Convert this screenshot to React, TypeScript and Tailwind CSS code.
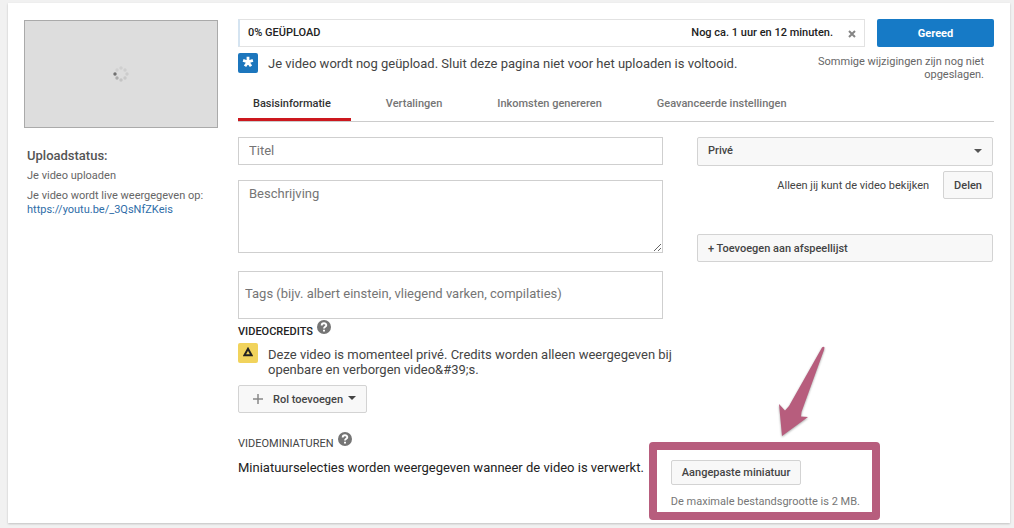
import { ReactNode, useState } from 'react'
import clsx from 'clsx'

const tabs = [
  'Basisinformatie',
  'Vertalingen',
  'Inkomsten genereren',
  'Geavanceerde instellingen',
]

const controlStyle =
  'rounded-[2px] border border-[#d3d3d3] bg-[#f8f8f8] text-[11px] font-medium text-[#444] hover:bg-[#f0f0f0]'

const buttonStyle = clsx(controlStyle, 'px-[10px] leading-4')

const fieldStyle =
  'block w-full border border-[#cfcfcf] bg-white text-[13px] leading-4 text-[#333] outline-none placeholder:text-[#757575] focus:border-[#1b7fcc]'

export default function App() {
  return (
    <div className="min-h-screen bg-[#f1f1f1] px-1 pt-[3px] pb-[5px] pl-2 font-['Roboto',sans-serif] text-[11px] leading-4 text-[#444]">
      <main className="flex gap-5 bg-white px-4 pt-4 pb-[3px] shadow-[0_1px_2px_rgba(0,0,0,0.2)]">
        <UploadStatus />
        <div className="min-w-0 flex-1">
          <UploadHeader />
          <Tabs />
          <div className="mt-[15px] flex gap-[34px] pr-px">
            <BasicForm />
            <PrivacySettings />
          </div>
          <Credits />
          <Thumbnails />
        </div>
      </main>
    </div>
  )
}

function UploadStatus() {
  return (
    <aside className="w-[194px] shrink-0 pt-px">
      <div className="flex h-[108px] items-center justify-center border border-[#aaa] bg-[#ddd]">
        <Spinner />
      </div>
      <div className="mt-5 pl-[3px] leading-[14px] text-[#666]">
        <h2 className="text-[13px] leading-4 font-medium text-[#555]">
          Uploadstatus:
        </h2>
        <p className="mt-[5px]">Je video uploaden</p>
        <p className="mt-[6px]">
          Je video wordt live weergegeven op:{' '}
          <a href="#" className="block text-[#2e6da8] hover:underline">
            https://youtu.be/_3QsNfZKeis
          </a>
        </p>
      </div>
    </aside>
  )
}

function UploadHeader() {
  return (
    <header>
      <div className="flex gap-3">
        <div className="flex h-7 flex-1 items-center border border-l-2 border-[#e2e2e2] border-l-[#d5e4f1] px-2 font-medium text-[#222]">
          <span>0% GEÜPLOAD</span>
          <span className="ml-auto">Nog ca. 1 uur en 12 minuten.</span>
          <button
            type="button"
            aria-label="Uploaden annuleren"
            className="ml-[15px] pt-0.5"
          >
            <svg viewBox="0 0 8 8" className="block size-2">
              <path
                d="M1 1l6 6M7 1L1 7"
                stroke="#858585"
                strokeWidth="2"
                fill="none"
              />
            </svg>
          </button>
        </div>
        <button
          type="button"
          className="h-7 w-[117px] rounded-[2px] bg-[#167ac6] pt-0.5 font-bold text-white hover:bg-[#126db3]"
        >
          Gereed
        </button>
      </div>
      <div className="mt-[6px] flex items-start justify-between">
        <div className="flex items-start gap-[10px]">
          <span className="flex size-5 items-center justify-center rounded-[2px] bg-[#1c76bd]">
            <svg viewBox="0 0 12 12" className="mb-0.5 size-3">
              <path
                d="M6 6V.8M6 6L1.1 4.4M6 6l4.9-1.6M6 6l-3 4.2M6 6l3 4.2"
                stroke="#fff"
                strokeWidth="2.8"
                fill="none"
              />
            </svg>
          </span>
          <p className="pt-[3px] text-[13px] leading-4">
            Je video wordt nog geüpload. Sluit deze pagina niet voor het
            uploaden is voltooid.
          </p>
        </div>
        <p className="max-w-[186px] pt-0.5 pr-[10px] text-right leading-[13px] text-[#666]">
          Sommige wijzigingen zijn nog niet opgeslagen.
        </p>
      </div>
    </header>
  )
}

function Tabs() {
  const [active, setActive] = useState(tabs[0])

  return (
    <nav className="mt-2 flex gap-5 border-b border-[#ccc]">
      {tabs.map((tab) => (
        <button
          key={tab}
          type="button"
          onClick={() => setActive(tab)}
          className={clsx(
            'h-8 border-b-3 pr-5 pl-[15px] font-medium',
            tab === active
              ? 'border-[#cc181e] text-[#333]'
              : 'border-transparent text-[#757575]',
          )}
        >
          {tab}
        </button>
      ))}
    </nav>
  )
}

function BasicForm() {
  return (
    <form className="min-w-0 flex-1">
      <input
        aria-label="Titel"
        placeholder="Titel"
        className={clsx(fieldStyle, 'h-7 px-[10px] pb-0.5')}
      />
      <textarea
        aria-label="Beschrijving"
        placeholder="Beschrijving"
        className={clsx(
          fieldStyle,
          'mt-[15px] h-[73px] resize px-[10px] py-[5px]',
        )}
      />
      <input
        aria-label="Tags"
        placeholder="Tags (bijv. albert einstein, vliegend varken, compilaties)"
        className={clsx(fieldStyle, 'mt-[18px] h-12 px-[6px] pb-1')}
      />
    </form>
  )
}

function PrivacySettings() {
  return (
    <section className="w-[296px] shrink-0">
      <div className="relative">
        <select
          aria-label="Privacy"
          className={clsx(
            controlStyle,
            'h-[29px] w-full appearance-none px-[10px] pb-0.5',
          )}
        >
          <option>Privé</option>
          <option>Verborgen</option>
          <option>Openbaar</option>
        </select>
        <Caret className="pointer-events-none absolute top-3 right-[11px] text-[#555]" />
      </div>
      <div className="mt-[5px] flex items-center justify-end gap-[14px]">
        <span className="pt-0.5">Alleen jij kunt de video bekijken</span>
        <button type="button" className={clsx(buttonStyle, 'h-7 pt-0.5')}>
          Delen
        </button>
      </div>
      <button
        type="button"
        className={clsx(buttonStyle, 'mt-[35px] h-7 w-full pt-0.5 text-left')}
      >
        + Toevoegen aan afspeellijst
      </button>
    </section>
  )
}

function Credits() {
  return (
    <section>
      <SectionTitle>
        <span className="font-medium text-[#222]">VIDEOCREDITS</span>
      </SectionTitle>
      <div className="mt-[3px] flex items-start gap-[10px]">
        <span className="flex size-5 shrink-0 items-center justify-center rounded-[2px] bg-[#f1d35c]">
          <svg viewBox="0 0 10 10" className="mb-0.5 size-[10px]">
            <path
              d="M5 1.8L8.6 8.2H1.4z"
              stroke="#222"
              strokeWidth="2"
              fill="none"
            />
          </svg>
        </span>
        <p className="max-w-[410px] pt-1 text-[13px] leading-[15px]">
          Deze video is momenteel privé. Credits worden alleen weergegeven bij
          openbare en verborgen video&amp;#39;s.
        </p>
      </div>
      <button
        type="button"
        className={clsx(buttonStyle, 'mt-2 flex h-7 items-center pt-0.5')}
      >
        <svg viewBox="0 0 10 10" className="mx-1 mb-0.5 size-[10px]">
          <path d="M5 0v10M0 5h10" stroke="#888" strokeWidth="1.5" />
        </svg>
        <span className="mr-[5px] ml-[6px]">Rol toevoegen</span>
        <Caret className="mb-1" />
      </button>
    </section>
  )
}

function Thumbnails() {
  return (
    <section className="mt-[18px] flex items-start gap-[5px]">
      <div className="shrink-0">
        <SectionTitle>VIDEOMINIATUREN</SectionTitle>
        <p className="mt-2 text-[13px] leading-4 text-[#222]">
          Miniatuurselecties worden weergegeven wanneer de video is verwerkt.
        </p>
      </div>
      <div className="relative mt-[11px] rounded-[4px] border-8 border-[#b75d7d] pt-[10px] pr-3 pb-1 pl-[14px]">
        <button type="button" className={clsx(buttonStyle, 'block h-[25px]')}>
          Aangepaste miniatuur
        </button>
        <p className="mt-[10px] leading-[13px] whitespace-nowrap text-[#767676]">
          De maximale bestandsgrootte is 2 MB.
        </p>
        <svg
          viewBox="0 0 52 96"
          className="absolute -top-[106px] left-[119px] h-24 w-[52px] drop-shadow-[0_1px_1px_rgba(0,0,0,0.35)]"
        >
          <path
            d="M46 3.5Q47.5 2 48.5 3.5L48 6 25.5 68 25 72.5 32 73 6 92 3 60 9 66.5 13 62Z"
            fill="#b75d7d"
          />
        </svg>
      </div>
    </section>
  )
}

function SectionTitle(props: { children: ReactNode }) {
  return (
    <div className="flex h-[21px] items-end gap-1">
      <h3 className="leading-4">{props.children}</h3>
      <button type="button" aria-label="Help" className="mb-[6px]">
        <svg viewBox="0 0 14 14" className="block size-[14px]">
          <circle cx="7" cy="7" r="7" fill="#757575" />
          <path
            d="M4.7 5.5C4.7 2.6 9.3 2.6 9.3 5.3C9.3 6.8 7 6.9 7 8.6"
            stroke="#fff"
            strokeWidth="1.9"
            fill="none"
          />
          <path d="M6 9.7h2v1.8H6z" fill="#fff" />
        </svg>
      </button>
    </div>
  )
}

function Caret(props: { className?: string }) {
  return (
    <svg viewBox="0 0 8 4" className={clsx('h-1 w-2', props.className)}>
      <path d="M0 0h8L4 4z" fill="currentColor" />
    </svg>
  )
}

const spinnerDots = [
  { x: 2, y: 8, color: '#707070' },
  { x: 4, y: 12, color: '#adadad' },
  { x: 8, y: 14, color: '#c4c4c4' },
  { x: 12, y: 12, color: '#c9c9c9' },
  { x: 14, y: 8, color: '#cccccc' },
  { x: 12, y: 4, color: '#cecece' },
  { x: 8, y: 2, color: '#cfcfcf' },
  { x: 4, y: 4, color: '#d0d0d0' },
]

function Spinner() {
  return (
    <svg viewBox="0 0 16 16" className="size-4">
      {spinnerDots.map(({ x, y, color }) => (
        <circle key={color} cx={x} cy={y} r="1.7" fill={color} />
      ))}
    </svg>
  )
}
